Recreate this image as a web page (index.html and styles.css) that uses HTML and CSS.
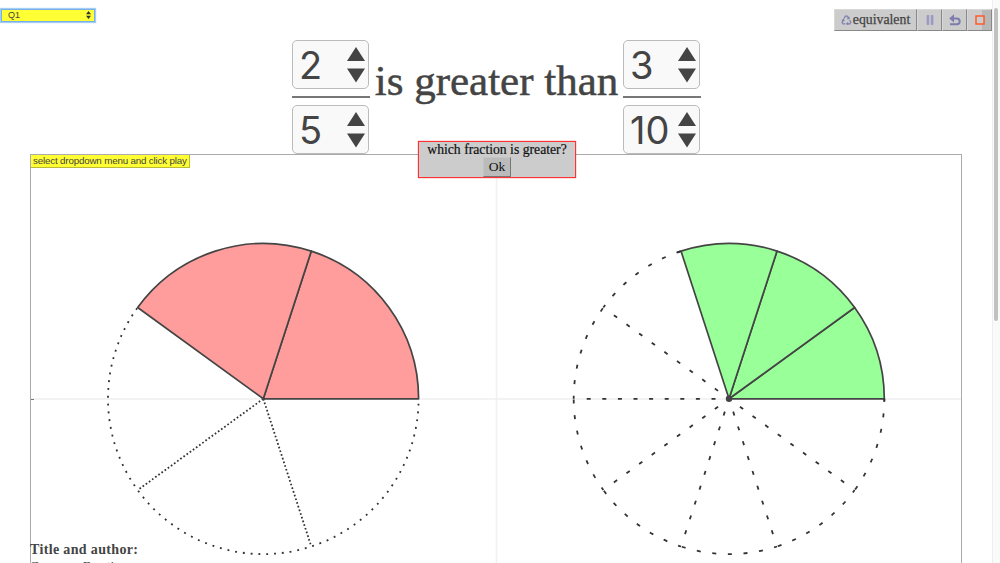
FILE: index.html
```html
<!DOCTYPE html>
<html>
<head>
  <meta charset="utf-8">
  <meta name="viewport" content="width=device-width, initial-scale=1">
  <title>Compare Fractions</title>
  <link rel="stylesheet" href="styles.css">
</head>
<body>
  <div class="topbar">
    <div class="question">
      <span>Q1</span>
      <svg width="5" height="8" viewBox="0 0 5 8"><path d="M0 3.2L2.5 0L5 3.2zM0 4.8L2.5 8L5 4.8z" fill="#333"/></svg>
    </div>
    <div class="toolbar">
      <button class="tool tool-wide">
        <svg width="11" height="10" viewBox="0 0 11 10" fill="none" stroke="#7f7fb2" stroke-width="1.2">
          <path d="M3 3.6L4.3 1.2H6.4L7.8 3.6M6.2 3.6H8V1.8M8.6 5L9.9 7.2L8.9 8.8H6M7.2 7.4L5.8 8.8L7.2 10M4.4 8.8H2L1 7.2L2.4 4.7M.9 5.3L2.5 4.6L3.2 6.2"/>
        </svg>
        <span>equivalent</span>
      </button>
      <button class="tool">
        <svg width="8" height="10" viewBox="0 0 8 10"><path d="M1 .5H2.8V9.5H1zM5.2 .5H7V9.5H5.2z" fill="#a0a0cc" stroke="#8484b4" stroke-width=".5"/></svg>
      </button>
      <button class="tool">
        <svg width="12" height="12" viewBox="0 0 12 12" fill="none" stroke="#7c7cae" stroke-width="2"><path d="M2 4.4H7.8A2.9 2.9 0 0 1 7.8 10.2H1"/><path d="M5 .3V8.5L.2 4.4z" fill="#7c7cae" stroke="none"/></svg>
      </button>
      <button class="tool tool-stop">
        <svg width="10" height="10" viewBox="0 0 10 10"><rect x="1" y="1" width="8" height="8" fill="#ccc" stroke="#ff5522" stroke-width="1.4"/></svg>
      </button>
    </div>
  </div>

  <div class="compare">
    <div class="fraction">
      <div class="number"><span>2</span><svg width="18" height="36" viewBox="0 0 18 36"><path d="M0 14L9 0L18 14zM0 21.5L9 35.5L18 21.5z"/></svg></div>
      <div class="bar"></div>
      <div class="number"><span>5</span><svg width="18" height="36" viewBox="0 0 18 36"><path d="M0 14L9 0L18 14zM0 21.5L9 35.5L18 21.5z"/></svg></div>
    </div>
    <div class="relation">is greater than</div>
    <div class="fraction">
      <div class="number"><span>3</span><svg width="18" height="36" viewBox="0 0 18 36"><path d="M0 14L9 0L18 14zM0 21.5L9 35.5L18 21.5z"/></svg></div>
      <div class="bar"></div>
      <div class="number"><span>10</span><svg width="18" height="36" viewBox="0 0 18 36"><path d="M0 14L9 0L18 14zM0 21.5L9 35.5L18 21.5z"/></svg></div>
    </div>
  </div>

  <div class="board">
    <svg class="graph" width="930" height="408" viewBox="0 0 930 408">
      <defs>
        <!-- fifths -->
        <path id="fifth" d="M0 0H155.3A155.3 155.3 0 0 0 47.99 -147.7Z"/>
        <path id="fifth-arc" d="M155.3 0A155.3 155.3 0 0 0 47.99 -147.7"/>
        <!-- tenths -->
        <path id="tenth" d="M0 0H155.3A155.3 155.3 0 0 0 125.64 -91.28Z"/>
        <path id="tenth-arc" d="M155.3 0A155.3 155.3 0 0 0 125.64 -91.28"/>
        <path id="tenth-line" d="M13.5 0H150"/>
      </defs>
      <path class="axis" d="M0 244H930M465.5 0V408"/>
      <path class="tick" d="M0 244.5H3"/>

      <g transform="translate(232.3 243.8)">
        <g class="dots">
          <use href="#fifth-arc" transform="rotate(-144)"/>
          <use href="#fifth-arc" transform="rotate(-216)"/>
          <use href="#fifth-arc" transform="rotate(-288)"/>
        </g>
        <g class="dots-line">
          <path d="M0 0H155.3" transform="rotate(-216)"/>
          <path d="M0 0H155.3" transform="rotate(-288)"/>
        </g>
        <g class="part red">
          <use href="#fifth"/>
          <use href="#fifth" transform="rotate(-72)"/>
        </g>
        <circle r="1.6" class="point"/>
      </g>

      <g transform="translate(698 243.8)">
        <g class="dashes">
          <use href="#tenth-arc" transform="rotate(-108)"/>
          <use href="#tenth-arc" transform="rotate(-144)"/>
          <use href="#tenth-arc" transform="rotate(-180)"/>
          <use href="#tenth-arc" transform="rotate(-216)"/>
          <use href="#tenth-arc" transform="rotate(-252)"/>
          <use href="#tenth-arc" transform="rotate(-288)"/>
          <use href="#tenth-arc" transform="rotate(-324)"/>
        </g>
        <g class="dashes-line">
          <use href="#tenth-line" transform="rotate(-144)"/>
          <use href="#tenth-line" transform="rotate(-180)"/>
          <use href="#tenth-line" transform="rotate(-216)"/>
          <use href="#tenth-line" transform="rotate(-252)"/>
          <use href="#tenth-line" transform="rotate(-288)"/>
          <use href="#tenth-line" transform="rotate(-324)"/>
        </g>
        <g class="part green">
          <use href="#tenth"/>
          <use href="#tenth" transform="rotate(-36)"/>
          <use href="#tenth" transform="rotate(-72)"/>
        </g>
        <path class="ends" d="M155.3 0V2.6M-48 -147.7L-51.5 -146.5"/>
        <circle r="3.2" class="point"/>
      </g>
    </svg>
    <div class="hint">select dropdown menu and click play</div>
    <div class="dialog">
      <div class="dialog-text">which fraction is greater?</div>
      <button class="ok">Ok</button>
    </div>
    <div class="credits">
      <div class="credits-title">Title and author:</div>
      <div class="credits-name">Compare Fractions</div>
    </div>
  </div>

  <div class="scrollbar"><div class="thumb"></div></div>
</body>
</html>
```
FILE: styles.css
```css
* {
  box-sizing: border-box;
}

body {
  margin: 0;
  height: 563px;
  overflow: hidden;
  position: relative;
  background-color: #fff;
  color: #444;
  font-family: Georgia, "Liberation Serif", serif;
}

svg {
  display: block;
  flex: none;
}

.topbar {
  display: flex;
  justify-content: space-between;
  align-items: flex-start;
  height: 40px;
  padding: 9px 8px 0 1px;
}

.question {
  display: flex;
  justify-content: space-between;
  align-items: center;
  width: 94px;
  height: 13px;
  padding: 0 3px 1px 6px;
  border: 1px solid #76aee8;
  background-color: #ffff33;
  box-shadow: 0 0 1px 1px #a3cdf5;
  font: 9px "Liberation Sans", sans-serif;
}

.toolbar {
  display: flex;
}

.tool {
  display: flex;
  align-items: center;
  justify-content: center;
  width: 25px;
  height: 22px;
  padding: 0;
  border: 1px solid;
  border-color: #d8d8d8 #888 #888 #d8d8d8;
  background-color: #ccc;
  color: #444;
}

.tool-wide {
  width: 83px;
  gap: 1px;
  font: 13.8px Georgia, "Liberation Serif", serif;
  -webkit-text-stroke: 0.25px #444;
}

.tool-stop {
  background: linear-gradient(to right, #ccc 14px, #b8b8b8 14px);
}

.compare {
  display: flex;
  padding-left: 292px;
  height: 114px;
}

.fraction {
  width: 78px;
}

.number {
  display: flex;
  justify-content: space-between;
  align-items: center;
  width: 77px;
  height: 49px;
  padding: 0 3px 0 6px;
  border: 1px solid #bbb;
  border-radius: 5px;
  background-color: #f9f9f9;
  font: 38px Inter, sans-serif;
}

.number path {
  fill: #444;
}

.bar {
  height: 2px;
  margin: 7px 0;
  background-color: #777;
}

.relation {
  width: 253px;
  padding-top: 18px;
  text-align: center;
  white-space: nowrap;
  font-size: 43px;
  line-height: 46px;
  -webkit-text-stroke: 0.5px #444;
}

.board {
  position: relative;
  width: 932px;
  height: 409px;
  margin-left: 30px;
  border: 1px solid #aaa;
  border-bottom: none;
}

.axis {
  stroke: #f0f0f0;
  stroke-width: 1.5;
}

.tick {
  stroke: #777;
}

.part {
  stroke: #444;
  stroke-width: 1.7;
  stroke-linejoin: round;
}

.red {
  fill: #ff9c9c;
}

.green {
  fill: #99ff99;
}

.dots, .dots-line, .dashes, .dashes-line, .ends {
  fill: none;
  stroke: #333;
  stroke-width: 1.8;
}

.dots {
  stroke-dasharray: 1.9 5.9;
  stroke-dashoffset: -0.9;
}

.dots-line {
  stroke-dasharray: 1.7 2.18;
}

.dashes {
  stroke-dasharray: 4 11.6;
  stroke-dashoffset: -0.8;
}

.dashes-line {
  stroke-dasharray: 4 11.6;
}

.point {
  fill: #444;
}

.hint {
  position: absolute;
  left: 0;
  top: 0;
  width: 159px;
  height: 13px;
  padding-left: 2px;
  border: 1px solid #bb3;
  border-width: 0 1px 1px 0;
  background-color: #ffff33;
  font: 9.8px/12px "Liberation Sans", sans-serif;
  letter-spacing: -0.18px;
  white-space: nowrap;
}

.dialog {
  position: absolute;
  left: 387px;
  top: -14px;
  width: 158px;
  height: 37px;
  border: 1px solid #ff3333;
  box-shadow: 0 0 1px #ff3333;
  background-color: #ccc;
  color: #111;
  text-align: center;
  white-space: nowrap;
}

.dialog-text {
  font-size: 13.7px;
  line-height: 15px;
  -webkit-text-stroke: 0.2px #111;
}

.ok {
  display: block;
  width: 28px;
  height: 20px;
  margin: 0 auto;
  padding: 0;
  border: 1px solid;
  border-color: #c4c4c4 #777 #777 #c4c4c4;
  background-color: #bbb;
  color: #111;
  font: 13.5px Georgia, "Liberation Serif", serif;
}

.credits {
  position: absolute;
  left: -1px;
  top: 387px;
  font-size: 13.5px;
  line-height: 16px;
}

.credits-title {
  font-size: 14px;
  font-weight: bold;
  letter-spacing: 0.35px;
}

.scrollbar {
  position: absolute;
  right: 0;
  top: 0;
  width: 8px;
  height: 563px;
  padding: 8px 2px 0 1px;
  border-left: 1px solid #eee;
  background-color: #fafafa;
}

.thumb {
  width: 4px;
  height: 313px;
  border-radius: 2px;
  background-color: #c1c1c1;
}
```
